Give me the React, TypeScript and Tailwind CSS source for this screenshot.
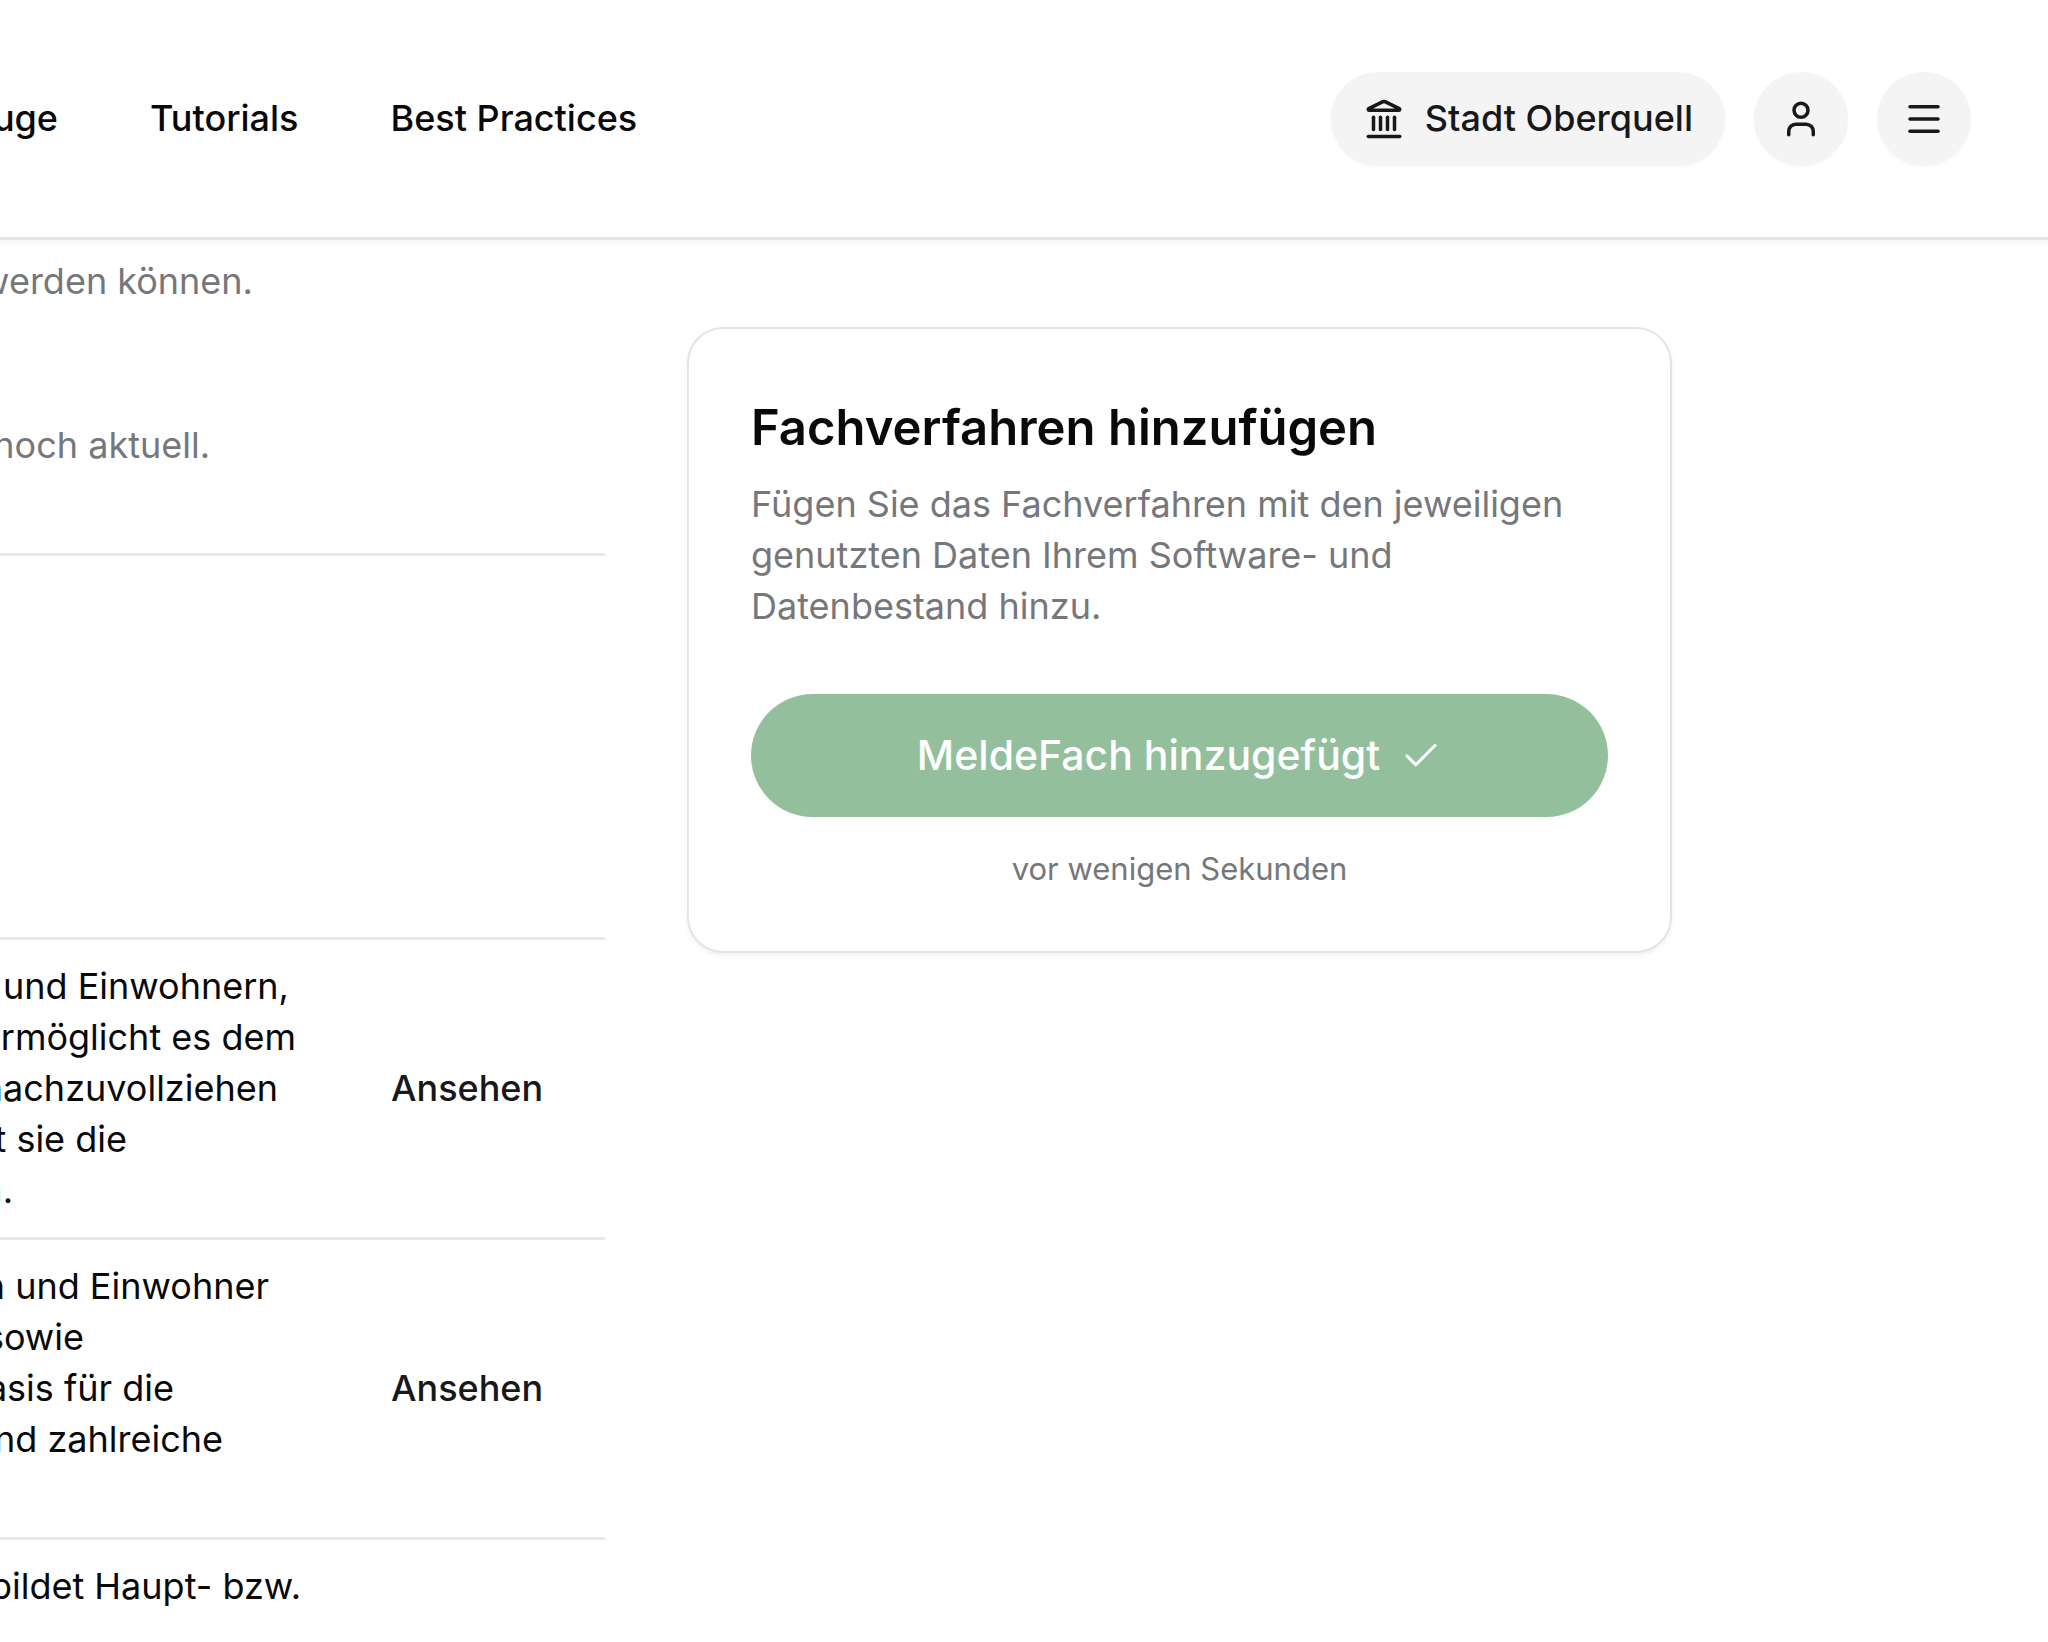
import type { ReactNode } from 'react'
import { Check, Landmark, Menu, User } from 'lucide-react'

interface Line {
  text: string
  width: string
}

interface Row {
  id: string
  lines: Line[]
  action: boolean
}

const rows: Row[] = [
  {
    id: 'einwohner',
    action: true,
    lines: [
      { text: 'und Einwohnern,', width: 'w-[289px]' },
      { text: 'rmöglicht es dem', width: 'w-[296px]' },
      { text: 'nachzuvollziehen', width: 'w-[278px]' },
      { text: 't sie die', width: 'w-[127px]' },
      { text: 'n.', width: 'w-[13px]' },
    ],
  },
  {
    id: 'melderegister',
    action: true,
    lines: [
      { text: 'n und Einwohner', width: 'w-[269px]' },
      { text: 'sowie', width: 'w-[84px]' },
      { text: 'asis für die', width: 'w-[174px]' },
      { text: 'nd zahlreiche', width: 'w-[223px]' },
      { text: '', width: 'w-full' },
    ],
  },
  {
    id: 'wohnsitz',
    action: false,
    lines: [{ text: 'bildet Haupt- bzw.', width: 'w-[301px]' }],
  },
]

function ClippedLine({ text, width }: Line) {
  return (
    <span className={`flex h-[51px] justify-end overflow-hidden whitespace-nowrap ${width}`}>
      {text}
    </span>
  )
}

function IconButton({ label, children }: { label: string; children: ReactNode }) {
  return (
    <button
      aria-label={label}
      className="flex size-[94px] items-center justify-center rounded-full bg-[#f4f4f4] text-[#18181b] shadow-[0_2px_4px_rgba(0,0,0,0.02)]"
    >
      {children}
    </button>
  )
}

function Header() {
  return (
    <header className="flex h-[240px] items-center justify-between border-b-[3px] border-[#e5e5e5] pr-[77px] shadow-[0_3px_5px_rgba(0,0,0,0.04)]">
      <nav className="flex items-center gap-[92px] font-medium text-[#09090b]">
        <a href="#" className="flex w-[58px] justify-end overflow-hidden">
          uge
        </a>
        <a href="#">Tutorials</a>
        <a href="#">Best Practices</a>
      </nav>
      <div className="flex items-center gap-[29px]">
        <button className="flex h-[94px] items-center gap-5 rounded-full bg-[#f4f4f4] px-8 font-medium text-[#18181b] shadow-[0_2px_4px_rgba(0,0,0,0.02)]">
          <Landmark size={42} />
          <span>Stadt Oberquell</span>
        </button>
        <IconButton label="Konto">
          <User size={42} />
        </IconButton>
        <IconButton label="Menü">
          <Menu size={42} />
        </IconButton>
      </div>
    </header>
  )
}

function DataTable() {
  return (
    <table className="mt-[381px] w-full table-fixed border-collapse">
      <tbody>
        {rows.map((row) => (
          <tr key={row.id} className="border-t-[3px] border-[#e8e8e8]">
            <td className="py-[21px]">
              {row.lines.map((line, i) => (
                <ClippedLine key={i} {...line} />
              ))}
            </td>
            <td className="w-[244px] pr-[61px] pl-[30px] align-middle">
              {row.action && <button className="font-medium text-[#18181b]">Ansehen</button>}
            </td>
          </tr>
        ))}
      </tbody>
    </table>
  )
}

function AddCard() {
  return (
    <aside className="mt-[87px] w-[985px] rounded-[36px] border-2 border-[#e4e4e4] bg-white px-[62px] pt-[63px] pb-[62px] shadow-[0_3px_5px_rgba(0,0,0,0.05)]">
      <h2 className="text-[49px] leading-[72px] font-semibold text-[#09090b]">
        Fachverfahren hinzufügen
      </h2>
      <p className="mt-[15px] text-[#76777a]">
        Fügen Sie das Fachverfahren mit den jeweiligen genutzten Daten Ihrem Software- und
        Datenbestand hinzu.
      </p>
      <button className="mt-[62px] flex h-[123px] w-full items-center justify-center gap-5 rounded-full bg-[#94bf9d] text-[41px] font-medium text-white shadow-[0_2px_4px_rgba(0,0,0,0.03)]">
        MeldeFach hinzugefügt
        <Check size={42} strokeWidth={1.8} />
      </button>
      <p className="mt-[31px] text-center text-[31px] leading-[41px] text-[#76777a]">
        vor wenigen Sekunden
      </p>
    </aside>
  )
}

export default function App() {
  return (
    <div className="min-h-screen bg-white font-['Inter',sans-serif] text-[36px] leading-[51px] text-[#09090b]">
      <Header />
      <main className="flex items-start gap-[82px] pr-[376px]">
        <section className="min-w-0 flex-1">
          <div className="border-b-[3px] border-[#e8e8e8] pt-4 pb-[82px] text-[#76777a]">
            <ClippedLine text="werden können." width="w-[253px]" />
            <div className="mt-[113px]">
              <ClippedLine text="noch aktuell." width="w-[210px]" />
            </div>
          </div>
          <DataTable />
        </section>
        <AddCard />
      </main>
    </div>
  )
}
